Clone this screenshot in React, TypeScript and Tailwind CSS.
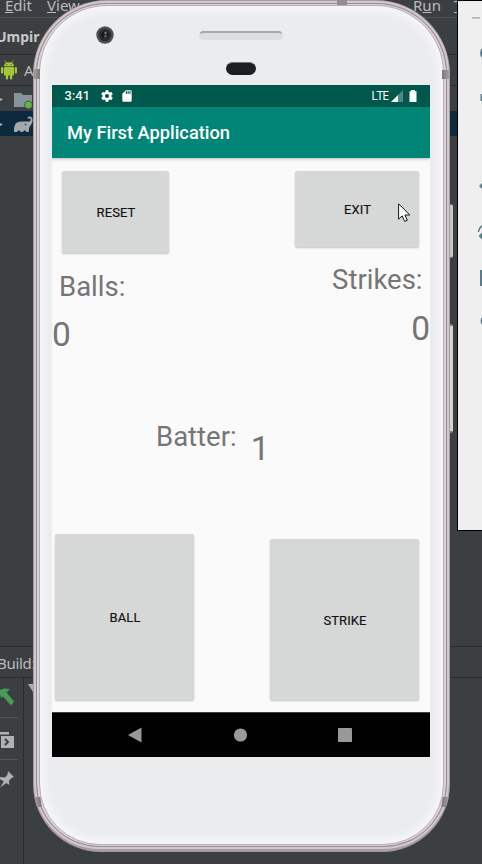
import React from "react";

function PadButton({ label, className }: { label: string; className: string }) {
  return (
    <button
      className={`flex items-center justify-center rounded-[2px] bg-[#d6d8d7] pl-px pt-[2px] text-[13px] font-normal tracking-[0.1px] text-[#111212] shadow-[0_1px_2px_rgba(0,0,0,0.22)] [-webkit-text-stroke:0.2px_#1d1e1e] ${className}`}
    >
      {label}
    </button>
  );
}

function Ide() {
  return (
    <div className="flex h-[864px] w-[482px] flex-col bg-[#3c3f41] text-[#bbbbbb]">
      <div className="h-[18px] shrink-0 border-b border-[#515151] text-[15px]">
        <div className="-mt-[6px] flex h-[22px] items-center whitespace-nowrap">
          <span className="ml-[5px] w-[42px]"><u>E</u>dit</span>
          <span className="w-[366px]"><u>V</u>iew</span>
          <span className="w-[41px]">R<u>u</u>n</span>
          <span><u>T</u></span>
        </div>
      </div>
      <div className="flex h-[37px] shrink-0 items-center border-b border-[#2b2b2b]">
        <span className="-ml-[4px] text-[14px] font-bold text-[#c8c8c8]">Umpir</span>
      </div>
      <div className="flex h-[31px] shrink-0 items-center border-b border-[#2b2b2b]">
        <svg className="ml-[1px] h-[20px] w-[16px]" viewBox="0 0 16 20" fill="#a4c639">
          <path d="M3 6.2C3 3.7 5 2.3 8 2.3s5 1.4 5 3.9z" />
          <path d="M4 .6 5.5 3M12 .6 10.5 3" stroke="#a4c639" strokeWidth=".8" />
          <rect x="3" y="7" width="10" height="8.4" rx="1" />
          <rect x="0" y="7" width="2.3" height="6.5" rx="1.1" />
          <rect x="13.7" y="7" width="2.3" height="6.5" rx="1.1" />
          <rect x="4.8" y="14" width="2.3" height="5.5" rx="1.1" />
          <rect x="8.9" y="14" width="2.3" height="5.5" rx="1.1" />
          <circle cx="6" cy="4.5" r=".6" fill="#3c3f41" />
          <circle cx="10" cy="4.5" r=".6" fill="#3c3f41" />
        </svg>
        <span className="ml-[7px] text-[15px]">A</span>
      </div>
      <div className="flex h-[25px] shrink-0 items-center">
        <svg className="h-[24px] w-[34px]" viewBox="0 0 34 24">
          <path d="M-4 9l7 3.500-7 3.500z" fill="#adadad" />
          <path d="M14 6h7l2 2h9v12H14z" fill="#87939a" />
          <circle cx="28.5" cy="18" r="4.2" fill="#3c3f41" />
          <circle cx="28.5" cy="18" r="3.4" fill="#62b543" />
        </svg>
      </div>
      <div className="flex h-[25px] shrink-0 items-center bg-[#0d293e]">
        <svg className="h-[24px] w-[36px]" viewBox="0 0 36 24">
          <path d="M-4 9l7 3.500-7 3.500z" fill="#adadad" />
          <path
            d="M14 20c-.2-5 .8-8.500 3.500-9.700 2.500-1 5-.6 7.500-.8 2.500 0 4.500.5 5.500-1 .8-2-1-3-2.300-1.800l-1-.9C29 3.500 33 4.500 32.600 8.500c-.3 4-3 5-3.500 8l-.3 3.500h-2.500c-.2-2-3-2-3.200 0h-2.600c-.2-2-3-2-3.200 0z"
            fill="#a3a8aa"
          />
          <circle cx="25.500" cy="12.500" r=".8" fill="#0d293e" />
        </svg>
      </div>
      <div className="grow" />
      <div className="flex h-[32px] shrink-0 items-center border-y border-[#2b2b2b]">
        <span className="-ml-[3px] mt-[2px] text-[15px] tracking-[-0.3px]">Build:</span>
      </div>
      <div className="flex h-[186px] shrink-0">
        <div className="flex w-[24px] flex-col border-r border-[#2b2b2b]">
          <div className="h-[40px] w-[18px] border-b border-[#555759]">
            <svg className="h-[39px] w-[18px]" viewBox="0 0 18 39">
              <path d="M0 16v-4l4-1.500 6 .5-3.500 3.500L14 23.500 11 27.500 3 18.500l-2 1.500z" fill="#499c54" />
            </svg>
          </div>
          <div className="h-[42px] w-[18px] border-b border-[#555759]">
            <svg className="h-[41px] w-[18px]" viewBox="0 0 18 41">
              <path d="M0 14h9v2.500H0zM1 18h13v12H1z" fill="#afb1b3" />
              <path d="M5 21l3 3-3 3" stroke="#3c3f41" strokeWidth="2" fill="none" />
            </svg>
          </div>
          <svg className="h-[40px] w-[18px]" viewBox="0 0 18 40">
            <path d="M8 11l6 6-2.500 1-2.500 2.500.4 4.500-3-2L0 27.500l3.800-6L0 19v-2l5 .4 2.600-2.800z" fill="#afb1b3" />
          </svg>
        </div>
        <svg className="ml-[4px] mt-[6px] h-[8px] w-[10px]" viewBox="0 0 10 8">
          <path d="M0 0h10L5 8z" fill="#adadad" />
        </svg>
      </div>
    </div>
  );
}

function EmulatorToolbar() {
  return (
    <div className="absolute left-[457px] top-0 h-[531px] w-[25px] border-y border-l border-black bg-[#efefef]">
      <svg className="h-[340px] w-[24px]" viewBox="0 0 24 340" fill="#5b7c8c">
        <rect x="14" y="16" width="8" height="1.600" fill="#a5b5bd" />
        <circle cx="29" cy="52" r="6" fill="none" stroke="#5b7c8c" strokeWidth="2" />
        <rect x="22.500" y="93" width="4" height="7" />
        <path d="M21 185l4-4v8z" />
        <path d="M20.500 231q.5-5 5-7" fill="none" stroke="#5b7c8c" strokeWidth="1.300" />
        <path d="M20.500 235l4-4v8z" />
        <rect x="22" y="269" width="4" height="16" />
        <circle cx="28" cy="320" r="4.500" fill="none" stroke="#5b7c8c" strokeWidth="2" />
      </svg>
    </div>
  );
}

function StatusBar() {
  return (
    <div className="flex h-[22px] shrink-0 items-center bg-[#00574b] text-white">
      <span className="ml-[12.500px] w-[35.500px] text-[13px] font-normal tracking-[0.2px] [-webkit-text-stroke:0.2px_white]">3:41</span>
      <svg className="h-[14px] w-[14px]" viewBox="0 0 24 24" fill="white">
        <path d="M19.430 12.980c.04-.32.07-.64.07-.98s-.03-.66-.07-.98l2.110-1.650c.19-.15.24-.42.12-.64l-2-3.460c-.12-.22-.39-.3-.61-.22l-2.490 1c-.52-.4-1.080-.73-1.690-.98l-.38-2.650A.488.488 0 0014 2h-4c-.25 0-.46.18-.49.42l-.38 2.650c-.61.25-1.170.59-1.690.98l-2.490-1c-.23-.09-.49 0-.61.22l-2 3.460c-.13.22-.07.49.12.64l2.110 1.650c-.04.32-.07.65-.07.98s.03.66.07.98l-2.110 1.650c-.19.15-.24.42-.12.64l2 3.460c.12.22.39.3.61.22l2.490-1c.52.4 1.080.73 1.690.98l.38 2.650c.03.24.24.42.49.42h4c.25 0 .46-.18.49-.42l.38-2.650c.61-.25 1.170-.59 1.690-.98l2.490 1c.23.09.49 0 .61-.22l2-3.460c.12-.22.07-.49-.12-.64zM12 15.500a3.500 3.500 0 110-7 3.500 3.500 0 010 7z" />
      </svg>
      <svg className="ml-[6px] h-[14px] w-[14px]" viewBox="0 0 24 24" fill="white">
        <path d="M18 2h-8L4 8v12c0 1.100.9 2 2 2h12c1.100 0 2-.9 2-2V4c0-1.100-.9-2-2-2zm-6 6h-2V4h2zm3 0h-2V4h2zm3 0h-2V4h2z" />
      </svg>
      <span className="ml-auto font-['Open_Sans',sans-serif] text-[12.500px] tracking-[-1.200px]">LTE</span>
      <svg className="ml-[3px] h-[12px] w-[12px]" viewBox="0 0 12 12">
        <path d="M0 12L12 0v12z" fill="#4d8981" />
        <path d="M0 12L7 5v7z" fill="white" />
      </svg>
      <svg className="ml-[6px] mr-[13px] h-[12px] w-[8px]" viewBox="0 0 8 12">
        <path d="M.5 1.200H2V0h4v1.200h1.500V12h-7z" fill="white" />
      </svg>
    </div>
  );
}

function Screen() {
  return (
    <div className="flex h-[672px] w-[378px] flex-col overflow-hidden bg-[#fafafa] font-[Roboto,sans-serif]">
      <StatusBar />
      <header className="z-10 flex h-[51px] shrink-0 items-center bg-[#008577] pl-[15px] pt-px text-[18.250px] font-medium text-white shadow-[0_1px_3px_rgba(0,0,0,0.25)]">
        My First Application
      </header>
      <main className="flex grow flex-col text-[#757575]">
        <div className="flex h-[250px] justify-between pt-[13px]">
          <div className="flex flex-col items-start">
            <PadButton label="RESET" className="ml-[10px] h-[82px] w-[107px]" />
            <span className="ml-[7px] mt-[17px] text-[27.500px] leading-[34px]">Balls:</span>
            <span className="mt-[11px] text-[33.500px] leading-[40px]">0</span>
          </div>
          <div className="flex flex-col items-end">
            <PadButton label="EXIT" className="mr-[11px] h-[76px] w-[124px]" />
            <span className="mr-[7.500px] mt-[16px] text-[27.500px] leading-[34px]">Strikes:</span>
            <span className="mt-[12px] text-[33.500px] leading-[40px]">0</span>
          </div>
        </div>
        <div className="flex items-start pl-[104px] pt-[12px]">
          <span className="text-[27.500px] leading-[34px]">Batter:</span>
          <span className="ml-[14px] mt-[9px] text-[33.500px] leading-[40px]">1</span>
        </div>
        <div className="mt-auto flex items-end justify-between pb-[12px] pl-[3px] pr-[11px]">
          <PadButton label="BALL" className="h-[166px] w-[139px]" />
          <PadButton label="STRIKE" className="h-[161px] w-[149px]" />
        </div>
      </main>
      <nav className="flex h-[45px] shrink-0 items-center border-t border-[#444] bg-black pl-[76px] pr-[78px]">
        <svg className="h-[16px] w-full" viewBox="0 0 224 16" fill="#999999">
          <path d="M0 8L13.500.5v15z" />
          <circle cx="112.500" cy="8" r="6.600" />
          <rect x="210" y="1" width="14" height="14" rx=".6" />
        </svg>
      </nav>
    </div>
  );
}

function Phone() {
  return (
    <div className="absolute left-[33px] top-0 h-[852px] w-[417px]">
      <div className="absolute left-[416px] top-[204px] h-[54px] w-[4px] rounded-r-[2px] border-y border-[#777] bg-[#c3c7c8]" />
      <div className="absolute left-[416px] top-[324px] h-[109px] w-[4px] rounded-r-[2px] border-y-2 border-[#85827d] bg-[#d4d4d3]" />
      <div className="relative h-full overflow-hidden rounded-b-[68px] rounded-t-[74px] bg-[#a59da1] px-[1px] pb-[3px] pt-[1px]">
        <div className="h-full rounded-b-[66px] rounded-t-[73px] border-2 border-[#d3c9cd]">
          <div className="h-full rounded-b-[64px] rounded-t-[71px] border border-[#958c91] bg-[#dbd3d7] px-[2px] pb-[1px] pt-[1px]">
            <div className="h-full rounded-b-[61px] rounded-t-[68px] border border-[#b5adb1] bg-[#ebecee] shadow-[inset_0_0_9px_4px_#f8f8fa]">
              <div className="flex h-[79px] flex-col items-center pr-[1px]">
                <div className="mt-[25px] h-[9px] w-[84px] rounded-full border border-t-2 border-[#dddfe2] border-t-[#a5a8af] bg-[#dcdee2]" />
                <div className="mt-[22px] h-[13px] w-[30px] rounded-full border-t border-[#6f7276] bg-[#1b1e22]" />
              </div>
              <div className="ml-[12px]">
                <Screen />
              </div>
            </div>
          </div>
        </div>
        <div className="absolute left-0 top-[69px] h-[10px] w-[7px] bg-linear-to-r from-[#aaa3a6] to-[#7d777b]" />
        <div className="absolute right-0 top-[70px] h-[9px] w-[8px] bg-linear-to-r from-[#7d777b] to-[#aaa3a6]" />
        <div className="absolute left-[304px] top-0 h-[5px] w-[10px] bg-[#948c90]" />
        <div className="absolute left-0 top-[797px] h-[10px] w-[8px] skew-x-[8deg] bg-linear-to-r from-[#b1a9ad] to-[#7d767a]" />
        <div className="absolute right-0 top-[797px] h-[10px] w-[8px] skew-x-[-8deg] bg-linear-to-r from-[#7d767a] to-[#b1a9ad]" />
      </div>
      <svg className="absolute left-[63px] top-[26px] h-[18px] w-[18px]" viewBox="0 0 18 18">
        <circle cx="9" cy="9" r="8.700" fill="#4d5054" />
        <circle cx="9" cy="9" r="6.300" fill="#292c30" />
        <circle cx="9" cy="9" r="3.600" fill="#17191c" />
        <circle cx="9.500" cy="7" r="1.300" fill="#6f737a" />
        <circle cx="9.500" cy="10.200" r="1.600" fill="#5d5727" />
      </svg>
    </div>
  );
}

export default function App() {
  return (
    <div className="relative h-[864px] w-[482px] overflow-hidden font-['Noto_Sans',sans-serif]">
      <Ide />
      <EmulatorToolbar />
      <Phone />
      <svg className="absolute left-[398px] top-[203px] h-[20px] w-[13px]" viewBox="0 0 13 20">
        <path d="M.6.8v15.400l3.600-3.300 2.500 5.600 2.600-1.200-2.400-5.300h4.900z" fill="white" stroke="#11141f" strokeWidth="1" />
      </svg>
    </div>
  );
}
